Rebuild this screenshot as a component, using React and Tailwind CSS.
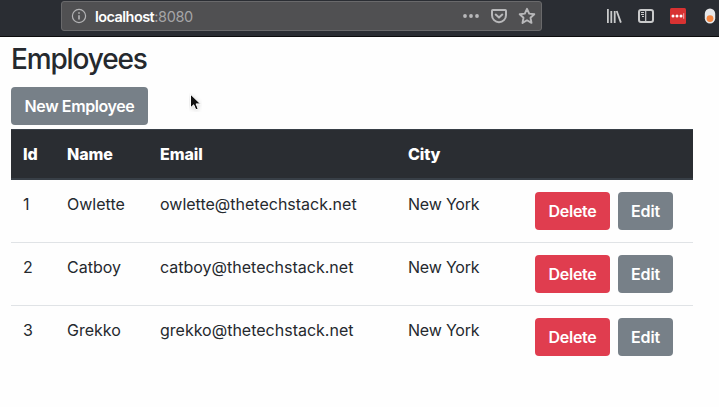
const employees = [
  { id: 1, name: 'Owlette', email: 'owlette@thetechstack.net', city: 'New York' },
  { id: 2, name: 'Catboy', email: 'catboy@thetechstack.net', city: 'New York' },
  { id: 3, name: 'Grekko', email: 'grekko@thetechstack.net', city: 'New York' },
];

function Button({ className, children }) {
  return (
    <button className={`h-[38px] rounded-[4px] text-center text-[16px] leading-6 font-semibold whitespace-nowrap text-white ${className}`}>
      {children}
    </button>
  );
}

function BrowserBar() {
  return (
    <header className="flex h-[37px] items-start border-b border-[#0c0c0d] bg-[#2a2d33] pt-px pl-[61px]">
      <div className="flex h-[30px] w-[481px] items-center rounded-[3px] border border-[#69696b] bg-[#505052] pl-[9px]">
        <svg width="16" height="16" viewBox="0 0 16 16" fill="none" stroke="#b4b4b6">
          <circle cx="8" cy="8" r="6.6" strokeWidth="1.2" />
          <path d="M8 7.2v4.3M8 4.2v1.6" strokeWidth="1.6" />
        </svg>
        <div className="ml-[8px] pt-px text-[14.5px] leading-5 tracking-[-0.35px] text-[#a5a5a7]">
          <span className="font-semibold tracking-[-0.55px] text-white">localhost</span>:8080
        </div>
        <svg className="ml-auto" width="18" height="16" viewBox="0 0 18 16" fill="#b8b8ba">
          <circle cx="3" cy="8" r="1.9" />
          <circle cx="9" cy="8" r="1.9" />
          <circle cx="15" cy="8" r="1.9" />
        </svg>
        <svg className="ml-[10px]" width="18" height="16" viewBox="0 0 18 16" fill="none" stroke="#b8b8ba" strokeWidth="2" strokeLinecap="round" strokeLinejoin="round">
          <path d="M2.8 2h12.4q.8 0 .8.8v4.4a7 7 0 0 1-14 0V2.8q0-.8.8-.8z" />
          <path d="m5.7 6.6 3.3 3 3.3-3" />
        </svg>
        <svg className="mr-[5px] ml-[10px]" width="18" height="18" viewBox="0 0 18 18" fill="none" stroke="#b8b8ba" strokeWidth="1.9" strokeLinejoin="round">
          <path d="m9 1.8 2.2 4.8 5.1.6-3.8 3.5 1 5.2L9 13.3l-4.5 2.6 1-5.2-3.8-3.5 5.1-.6z" />
        </svg>
      </div>
      <svg className="mt-[7px] ml-[64px]" width="16" height="16" viewBox="0 0 16 16" fill="none" stroke="#c9cacb" strokeWidth="1.8">
        <path d="M1.9 1v14M5.3 3v12M8.7 3v12M10.7 3l4.2 11.6" />
      </svg>
      <svg className="mt-[7px] ml-[16px]" width="16" height="16" viewBox="0 0 16 16" fill="none" stroke="#c9cacb">
        <rect x="1" y="2" width="14" height="12" rx="2" strokeWidth="2" />
        <path d="M7.7 2v12" strokeWidth="1.2" />
        <path d="M3 4.5h3M3 6.5h3M4 8.5h2" strokeWidth="1" />
      </svg>
      <svg className="mt-[7px] ml-[16px]" width="16" height="16" viewBox="0 0 16 16">
        <rect width="16" height="16" rx="1.5" fill="#d83232" />
        <g fill="#fff">
          <circle cx="3" cy="8" r="1.5" />
          <circle cx="7" cy="8" r="1.5" />
          <circle cx="11" cy="8" r="1.5" />
          <path d="M13.2 5.2h1v5.6h-1z" fill="#f4b3b3" />
        </g>
      </svg>
      <svg className="mt-[7px] ml-[18px]" width="12" height="16" viewBox="0 0 12 16">
        <rect x=".8" y=".5" width="10.4" height="15" rx="5.2" fill="#e7e8ea" />
        <circle cx="6" cy="10.6" r="3.4" fill="#f58742" />
      </svg>
    </header>
  );
}

export default function App() {
  return (
    <div className="relative h-[407px] w-[719px] overflow-hidden bg-[#fefefe] font-['Inter',sans-serif] text-[16px] leading-6 text-[#25292e]">
      <BrowserBar />
      <main className="w-[693px] pl-[11px]">
        <h2 className="pt-[5px] text-[28px] leading-[34px] font-medium tracking-[-1.15px]">Employees</h2>
        <Button className="mt-[11px] block w-[137px] bg-[#778088] tracking-[-0.4px]">New Employee</Button>
        <table className="mt-[4px] w-[682px] table-fixed border-separate border-spacing-0 text-left">
          <colgroup>
            <col className="w-[44px]" />
            <col className="w-[93px]" />
            <col className="w-[248px]" />
            <col className="w-[127px]" />
            <col className="w-[170px]" />
          </colgroup>
          <thead className="bg-[#2a2d32] text-white">
            <tr className="h-[51px]">
              {['Id', 'Name', 'Email', 'City', ''].map((label) => (
                <th key={label} className="border-t border-b-2 border-t-[#383f47] border-b-[#383f47] p-0 pl-3 font-extrabold tracking-[-0.1px]">
                  {label}
                </th>
              ))}
            </tr>
          </thead>
          <tbody className="align-top">
            {employees.map((person, index) => {
              const cell = index === 0 ? 'h-[62px] p-0 pt-3 pl-3' : 'h-[63px] border-t border-[#e0e3e6] p-0 pt-3 pl-3';
              return (
                <tr key={person.id}>
                  <td className={cell}>{person.id}</td>
                  <td className={cell}>{person.name}</td>
                  <td className={cell}>{person.email}</td>
                  <td className={`${cell} tracking-[-0.2px]`}>{person.city}</td>
                  <td className={cell}>
                    <div className="flex gap-2">
                      <Button className="w-[75px] bg-[#e03d4f] tracking-[-0.25px]">Delete</Button>
                      <Button className="w-[55px] bg-[#778088] tracking-[-0.15px]">Edit</Button>
                    </div>
                  </td>
                </tr>
              );
            })}
          </tbody>
        </table>
      </main>
      <svg className="absolute top-[93px] left-[189px]" width="13" height="19" viewBox="0 0 13 19">
        <path d="M1.5 1.2v13.6l3.2-3 2.1 5 2.4-1-2.1-4.9h4.4z" fill="#111" stroke="#fff" strokeWidth="1" className="drop-shadow-sm" />
      </svg>
    </div>
  );
}
